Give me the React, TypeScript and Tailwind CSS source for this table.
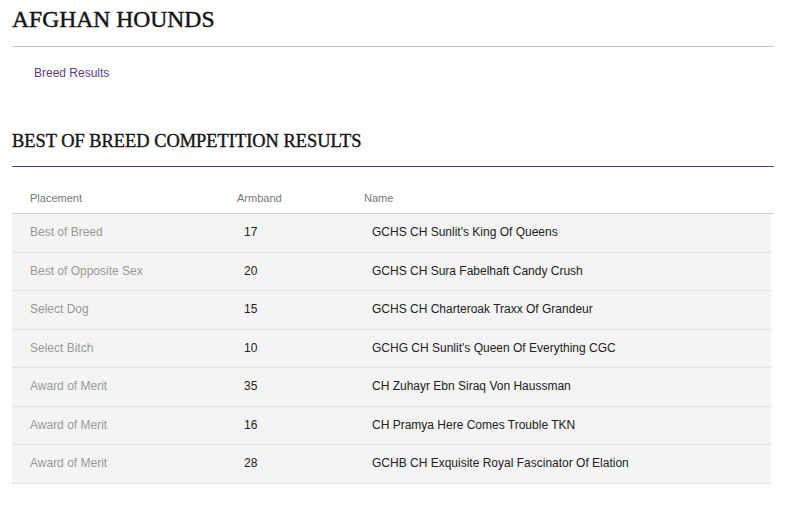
import React from "react";

const rows = [
  ["Best of Breed", "17", "GCHS CH Sunlit's King Of Queens"],
  ["Best of Opposite Sex", "20", "GCHS CH Sura Fabelhaft Candy Crush"],
  ["Select Dog", "15", "GCHS CH Charteroak Traxx Of Grandeur"],
  ["Select Bitch", "10", "GCHG CH Sunlit's Queen Of Everything CGC"],
  ["Award of Merit", "35", "CH Zuhayr Ebn Siraq Von Haussman"],
  ["Award of Merit", "16", "CH Pramya Here Comes Trouble TKN"],
  ["Award of Merit", "28", "GCHB CH Exquisite Royal Fascinator Of Elation"],
];

export default function App() {
  const serif = { fontFamily: '"Liberation Serif", "DejaVu Serif", serif' };
  return (
    <div className="w-[791px] h-[511px] bg-white overflow-hidden" style={{ fontFamily: '"Liberation Sans", Arial, sans-serif' }}>
      <div className="ml-[12px] w-[762px]">
        <div className="h-[47px] border-b border-[#c8c8c8] pt-[5px]">
          <h1 className="text-[23.6px] leading-[28px] text-[#151515] [-webkit-text-stroke:0.45px_#151515]" style={serif}>AFGHAN HOUNDS</h1>
        </div>
        <div className="pl-[22px] pt-[18px] text-[12px] leading-[16px] text-[#5a3d85]">Breed Results</div>
        <div className="h-[86px] pt-[49px] border-b border-[#5d3b80]">
          <h2 className="text-[18.4px] leading-[22px] text-[#151515] [-webkit-text-stroke:0.4px_#151515]" style={serif}>BEST OF BREED COMPETITION RESULTS</h2>
        </div>
        <div className="mt-[20px]">
          <div className="flex h-[27px] items-start pt-[3px] border-b border-[#cfcfcf] text-[11px] text-[#777]">
            <div className="w-[225px] pl-[18px]">Placement</div>
            <div className="w-[127px]">Armband</div>
            <div>Name</div>
          </div>
          {rows.map((r, i) => (
            <div key={i} className="flex items-center h-[38.5px] pb-[1px] bg-[#f4f4f4] border-b border-[#e2e2e2] text-[12px] mr-[3px]">
              <div className="w-[225px] pl-[18px] text-[#999]">{r[0]}</div>
              <div className="w-[127px] pl-[7px] text-[#222]">{r[1]}</div>
              <div className="pl-[8px] text-[#222]">{r[2]}</div>
            </div>
          ))}
        </div>
      </div>
    </div>
  );
}
